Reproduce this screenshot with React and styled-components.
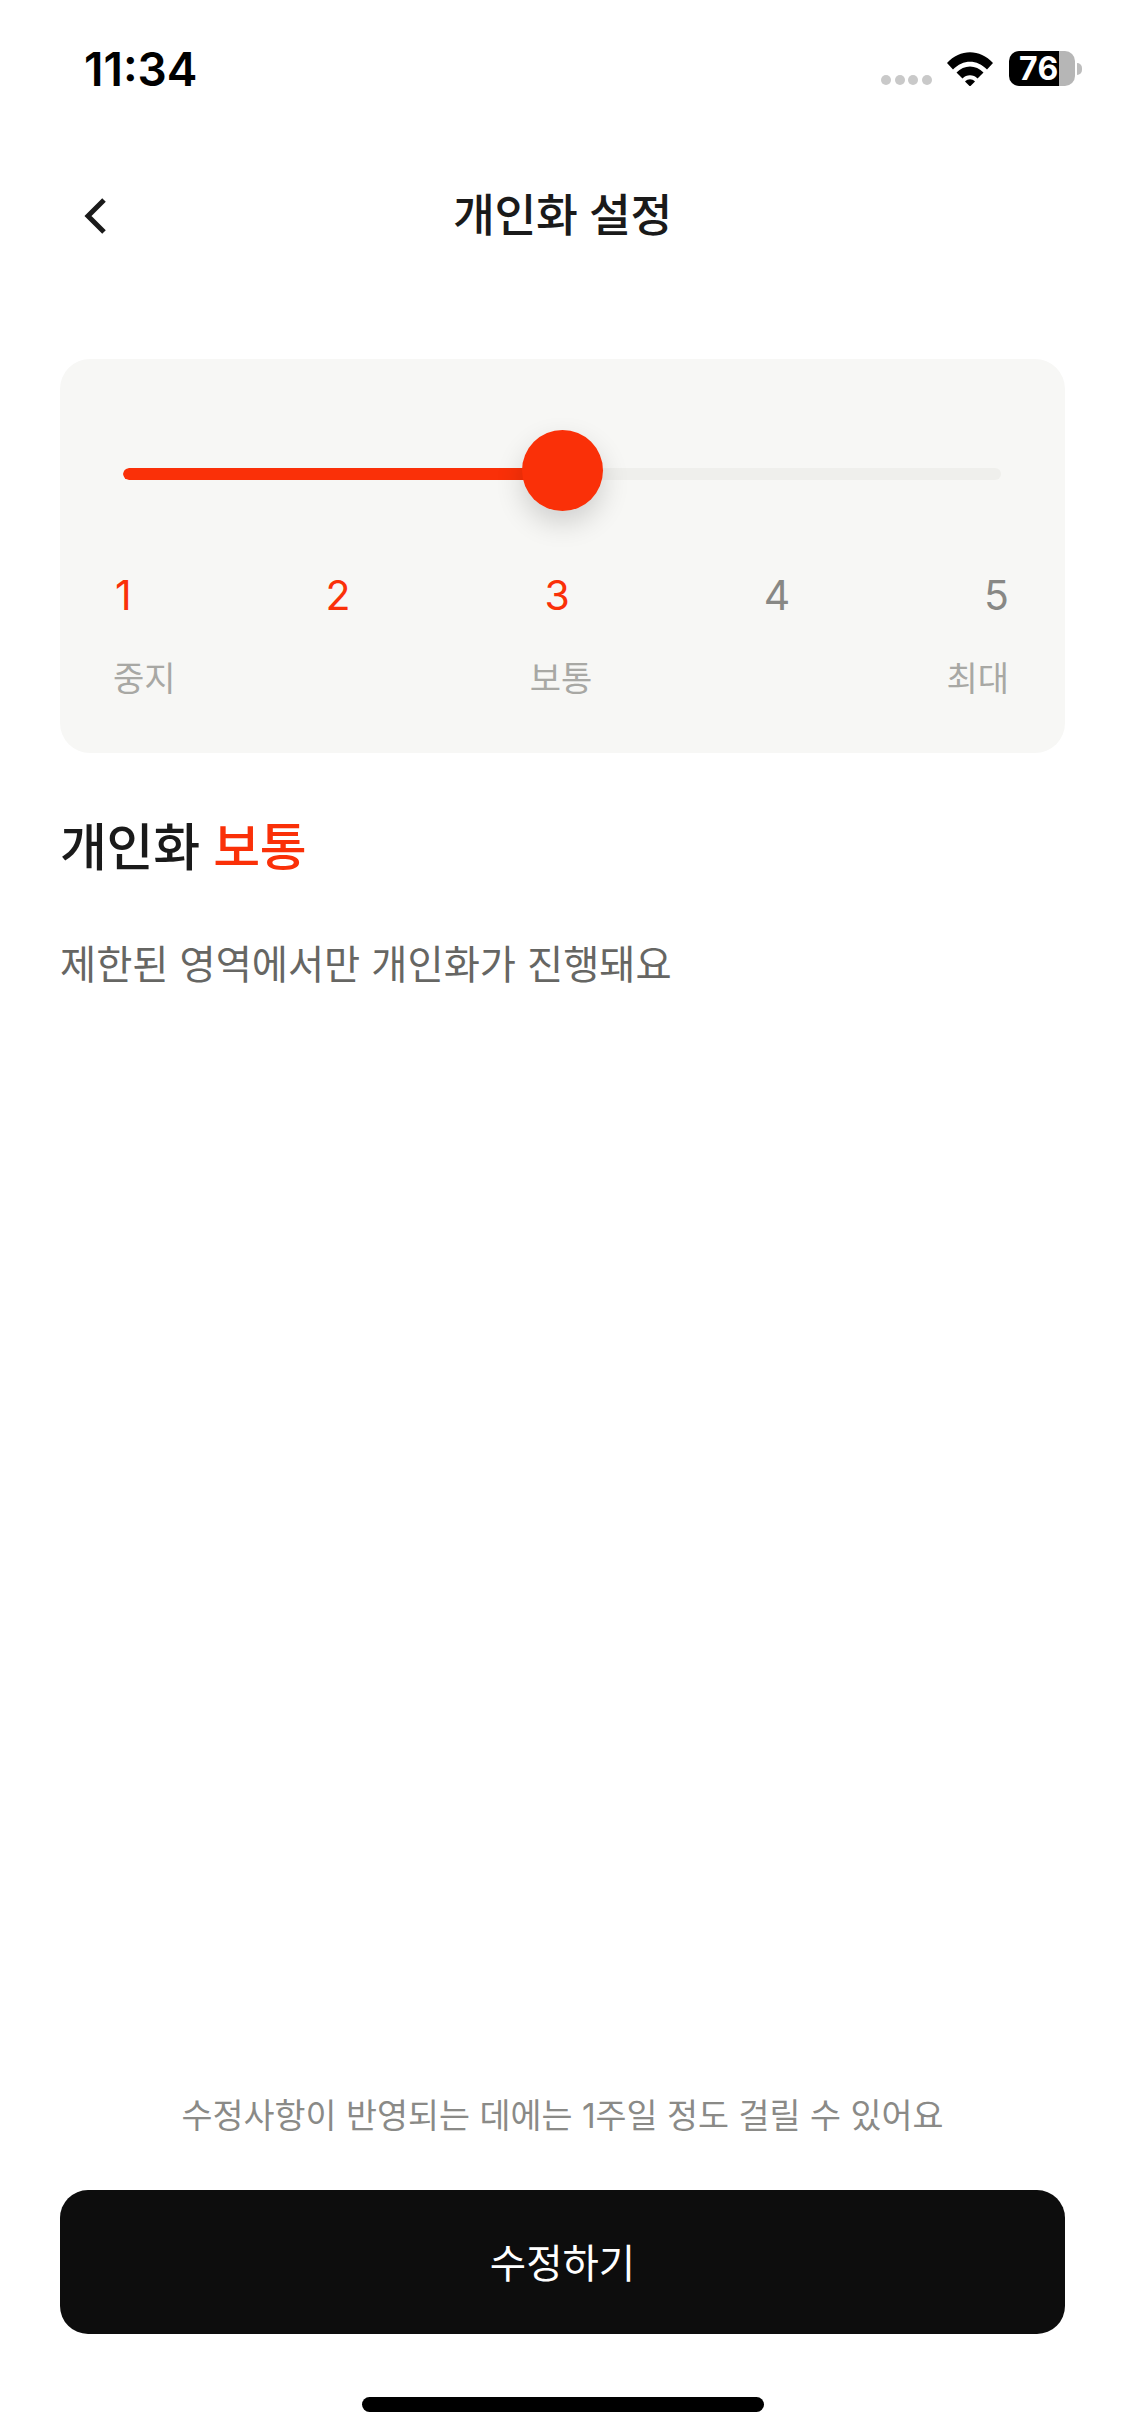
import React from "react";
import styled, { createGlobalStyle } from "styled-components";

const Global = createGlobalStyle`
  html, body { margin: 0; padding: 0; background: #fff; }
  #root { width: 1125px; }
  * { box-sizing: border-box; }
`;

const Screen = styled.div`
  width: 1125px;
  height: 2436px;
  display: flex;
  flex-direction: column;
  background: #fff;
  font-family: Inter, "Noto Sans CJK KR", sans-serif;
`;

const StatusBar = styled.div`
  height: 35px;
  margin-top: 51px;
  padding: 0 43px 0 84px;
  display: flex;
  justify-content: space-between;
  align-items: center;
`;

const Time = styled.div`
  font-size: 46px;
  font-weight: 600;
  line-height: 46px;
  color: #000;
`;

const StatusIcons = styled.div`
  display: flex;
  align-items: flex-start;
`;

const SignalDots = styled.div`
  display: flex;
  gap: 3.6px;
  margin-top: 24px;
  margin-right: 15px;
`;

const Dot = styled.span`
  width: 10px;
  height: 10px;
  border-radius: 50%;
  background: #c9c9c9;
`;

const WifiIcon = styled.svg`
  margin-top: 1px;
`;

const Battery = styled.div`
  margin-left: 16px;
  width: 66px;
  height: 35px;
  border-radius: 10px;
  background: linear-gradient(90deg, #000 0 50px, #b6b6b6 50px);
  padding-left: 10px;
  color: #fff;
  font-size: 32px;
  font-weight: 700;
  line-height: 35px;
  letter-spacing: 0.5px;
`;

const BatteryTip = styled.span`
  width: 5px;
  height: 12px;
  margin: 12px 0 0 2px;
  background: #bdbdbd;
  border-radius: 0 6px 6px 0;
`;

const NavBar = styled.div`
  margin-top: 85px;
  height: 90px;
  display: grid;
  grid-template-columns: 1fr auto 1fr;
  align-items: center;
  padding: 0 83px;
`;

const BackButton = styled.button`
  width: 24px;
  height: 36px;
  padding: 0;
  border: 0;
  background: none;
  display: flex;
`;

const Title = styled.h1`
  margin: 0;
  font-size: 45.5px;
  font-weight: 500;
  line-height: 60px;
  color: #1a1a1a;
  letter-spacing: -0.4px;
`;

const Content = styled.main`
  flex: 1;
  padding: 0 60px;
  display: flex;
  flex-direction: column;
`;

const Card = styled.section`
  margin-top: 98px;
  height: 394px;
  padding: 71px 56px 0 53px;
  border-radius: 30px;
  background: #f7f7f5;
`;

const SliderArea = styled.div`
  position: relative;
  height: 81px;
  margin: 0 8px 0 10px;
  display: flex;
  align-items: center;
`;

const Track = styled.div`
  width: 100%;
  height: 12px;
  margin-top: 7px;
  border-radius: 6px;
  background: #efefec;
  overflow: hidden;
`;

const TrackFill = styled.div`
  height: 100%;
  border-radius: 6px;
  background: #fa3008;
`;

const Thumb = styled.div`
  position: absolute;
  top: 0;
  left: 50%;
  width: 81px;
  height: 81px;
  margin-left: -40.5px;
  border-radius: 50%;
  background: #fa3008;
  box-shadow: 0 12px 28px rgba(0, 0, 0, 0.16);
`;

const Numbers = styled.div`
  margin-top: 60px;
  padding-left: 2px;
  display: flex;
  justify-content: space-between;
`;

const Num = styled.span`
  font-size: 41px;
  font-weight: 400;
  line-height: 48px;
  color: ${(p) => (p.$on ? "#fa3008" : "#888885")};
`;

const Labels = styled.div`
  margin-top: 38px;
  display: flex;
  justify-content: space-between;
`;

const Label = styled.span`
  font-size: 34px;
  line-height: 44px;
  color: #a8a8a4;
`;

const Heading = styled.h2`
  margin: 60px 0 0;
  font-size: 51px;
  font-weight: 500;
  line-height: 70px;
  color: #1a1a1a;
  letter-spacing: -0.3px;
`;

const Accent = styled.span`
  color: #fa3008;
`;

const Description = styled.p`
  margin: 57px 0 0;
  font-size: 39.3px;
  line-height: 50px;
  color: #666663;
`;

const Spacer = styled.div`
  flex: 1;
`;

const Notice = styled.p`
  margin: 0;
  text-align: center;
  font-size: 33.7px;
  line-height: 46px;
  color: #8a8a87;
`;

const PrimaryButton = styled.button`
  margin-top: 51px;
  width: 100%;
  height: 144px;
  border: 0;
  border-radius: 28px;
  background: #0d0d0d;
  color: #fff;
  font-family: inherit;
  font-size: 39.5px;
  font-weight: 400;
  padding-bottom: 4px;
`;

const HomeIndicator = styled.div`
  width: 402px;
  height: 15px;
  margin: 63px auto 24px;
  border-radius: 8px;
  background: #000;
`;

const steps = [1, 2, 3, 4, 5];
const current = 3;

export default function App() {
  return (
    <Screen>
      <Global />
      <StatusBar>
        <Time>11:34</Time>
        <StatusIcons>
          <SignalDots>
            <Dot /><Dot /><Dot /><Dot />
          </SignalDots>
          <WifiIcon width="46" height="34" viewBox="0 0 46 34">
            <path d="M0 11 C13 -3.5 33 -3.5 46 11 L40 17.5 C30 7 16 7 6 17.5 Z" fill="#000" />
            <path d="M9.5 20.5 C17 12.5 29 12.5 36.5 20.5 L30.5 26.5 C26.5 22.3 19.5 22.3 15.5 26.5 Z" fill="#000" />
            <path d="M18 29.5 C21 26.5 25 26.5 28 29.5 L23 34.5 Z" fill="#000" />
          </WifiIcon>
          <Battery>76</Battery>
          <BatteryTip />
        </StatusIcons>
      </StatusBar>
      <NavBar>
        <BackButton aria-label="back">
          <svg width="24" height="36" viewBox="0 0 24 36" fill="none">
            <path d="M21 2 L5 18 L21 34" stroke="#1a1a1a" strokeWidth="5" />
          </svg>
        </BackButton>
        <Title>개인화 설정</Title>
      </NavBar>
      <Content>
        <Card>
          <SliderArea>
            <Track>
              <TrackFill style={{ width: "50%" }} />
            </Track>
            <Thumb />
          </SliderArea>
          <Numbers>
            {steps.map((n) => (
              <Num key={n} $on={n <= current}>{n}</Num>
            ))}
          </Numbers>
          <Labels>
            <Label>중지</Label>
            <Label>보통</Label>
            <Label>최대</Label>
          </Labels>
        </Card>
        <Heading>
          개인화 <Accent>보통</Accent>
        </Heading>
        <Description>제한된 영역에서만 개인화가 진행돼요</Description>
        <Spacer />
        <Notice>수정사항이 반영되는 데에는 1주일 정도 걸릴 수 있어요</Notice>
        <PrimaryButton>수정하기</PrimaryButton>
        <HomeIndicator />
      </Content>
    </Screen>
  );
}
